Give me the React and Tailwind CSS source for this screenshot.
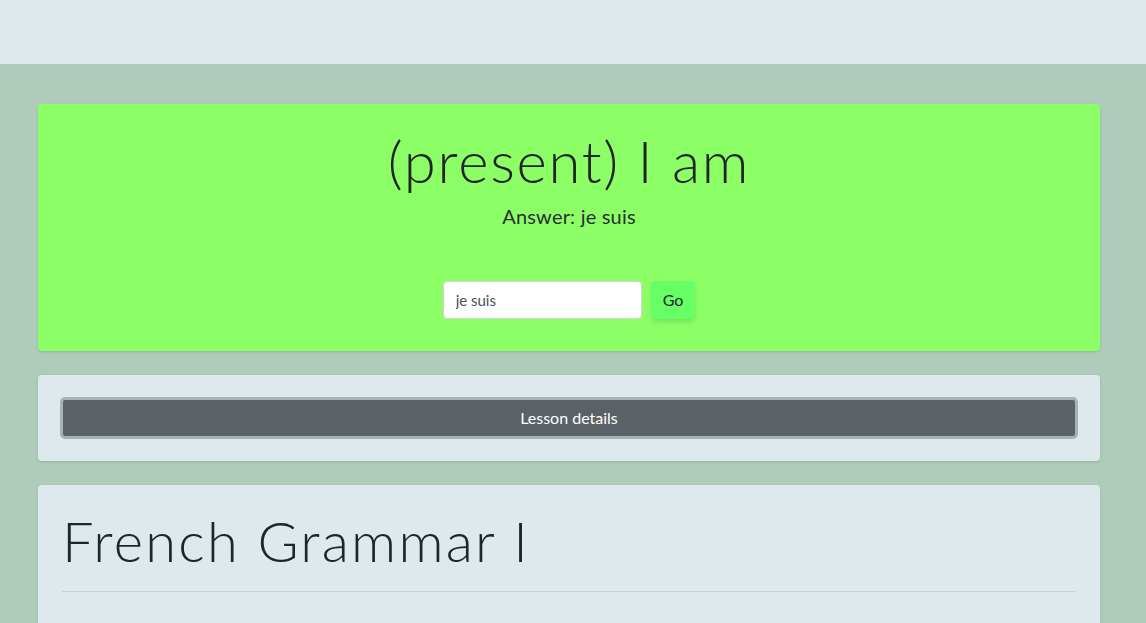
export default function App() {
  return (
    <div
      className="min-h-screen bg-[#afcbb9] text-[#212529]"
      style={{ fontFamily: "Lato, 'Noto Sans', sans-serif" }}
    >
      <div className="h-16 bg-[#dee9ee]" />

      <div className="px-[38px] pt-10 flex flex-col gap-6 w-[1138px]">
        <div className="bg-[#8cff66] rounded-[4px] shadow-sm pt-[20px] pb-[32px] flex flex-col items-center">
          <h1 className="text-[58px] leading-[74px] font-light tracking-[0.03em]">(present) I am</h1>
          <p className="mt-[4px] text-[20px] leading-[28px] tracking-[0.01em] text-[#2a2f33]">Answer: je suis</p>
          <div className="mt-[51px] flex items-center gap-[9px]">
            <input
              className="w-[199px] h-[38px] bg-white border border-[#ced4da] rounded-[4px] px-3 text-[15px] text-[#495057] outline-none"
              defaultValue="je suis"
            />
            <button className="h-[38px] px-[12px] bg-[#66ff66] rounded-[4px] text-[16px] shadow-md">
              Go
            </button>
          </div>
        </div>

        <div className="bg-[#dee9ee] rounded-[4px] shadow-sm p-[22px]">
          <button className="w-full h-[42px] bg-[#5a6268] text-white text-[16px] rounded-[5px] border-[3px] border-[#a9b1b8]">
            Lesson details
          </button>
        </div>

        <div className="bg-[#dee9ee] rounded-t-[4px] shadow-sm px-6 pt-[20px] h-[200px]">
          <h2 className="text-[56px] leading-[72px] font-light tracking-[0.04em]">French Grammar I</h2>
          <hr className="mt-[14px] border-t border-[#c6d2d8]" />
        </div>
      </div>
    </div>
  );
}
